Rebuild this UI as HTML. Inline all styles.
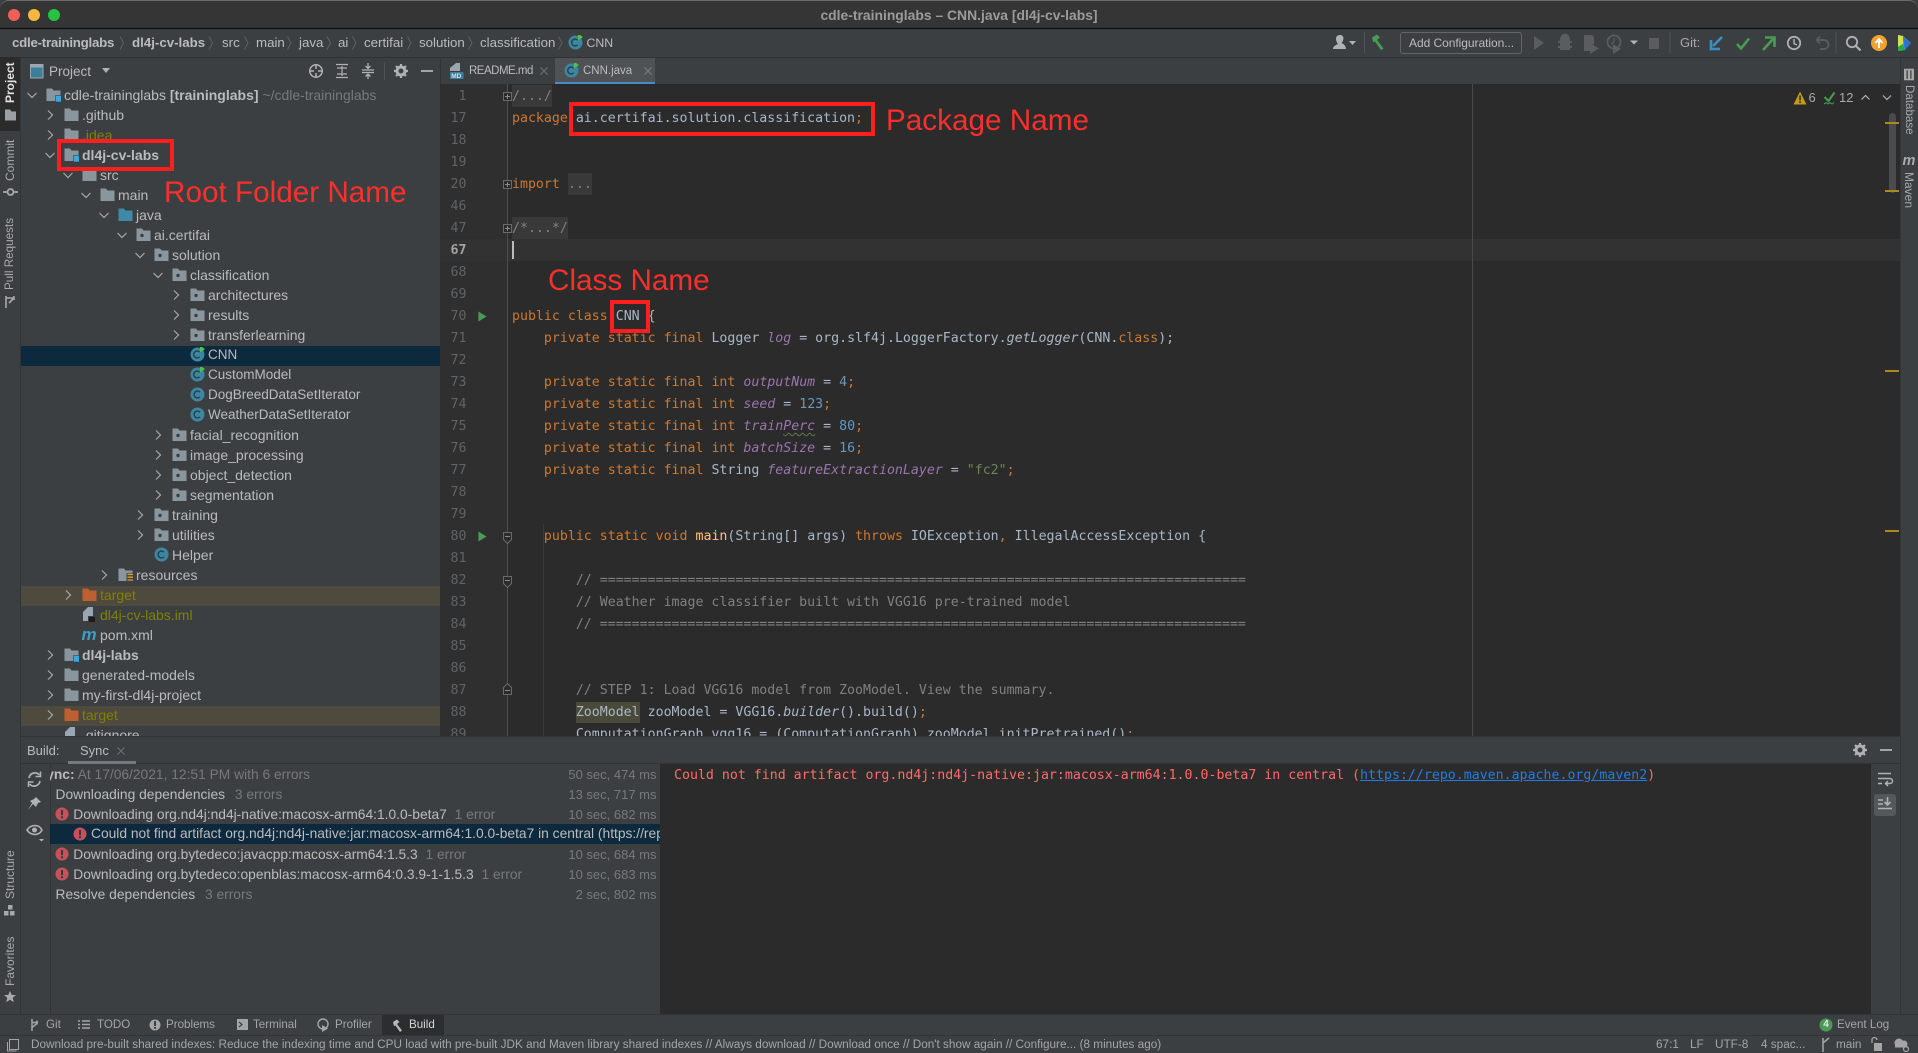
<!DOCTYPE html>
<html><head><meta charset="utf-8"><title>CNN.java</title>
<style>
*{box-sizing:border-box}
html,body{margin:0;padding:0;background:#000}
#a{position:relative;width:1918px;height:1053px;overflow:hidden;background:#3c3f41;font-family:"Liberation Sans",sans-serif;color:#bbb;font-size:14px}
.p{position:absolute}
.t{position:absolute;white-space:nowrap}
svg{position:absolute;overflow:visible}
.r{position:absolute;height:20px;line-height:20px;white-space:nowrap;padding-left:18px;color:#bbb;font-size:14px}
.r svg.c{left:-21px;top:3px;width:14px;height:14px}
.r svg.i{left:0;top:2px;width:15px;height:15px}
.q{font-size:13.5px}
.o{color:#808000}.b{font-weight:bold}.d{color:#787878}
.nv{position:absolute;top:33px;height:20px;line-height:20px;font-size:13.3px;white-space:nowrap;color:#bbb}
.l{position:absolute;left:512px;height:22px;margin:0;font:13.26px/22px "DejaVu Sans Mono","Liberation Mono",monospace;white-space:pre;color:#a9b7c6}
.k{color:#cc7832}.f{color:#9876aa;font-style:italic}.n{color:#6897bb}.s{color:#6a8759}.m{color:#808080}.e{font-style:italic}
.g{position:absolute;left:430px;width:36.5px;text-align:right;height:22px;font:13.26px/22px "DejaVu Sans Mono","Liberation Mono",monospace;color:#606366}
.v{position:absolute;writing-mode:vertical-rl;transform:rotate(180deg);left:3px;width:14px;line-height:14px;font-size:12px;color:#a9a9a9;white-space:nowrap}
.w{position:absolute;writing-mode:vertical-rl;left:1902px;width:14px;line-height:14px;font-size:12px;color:#a9a9a9;white-space:nowrap}
.box{position:absolute;border:4.5px solid #fb1f1f}
.lab{position:absolute;font-size:29.7px;line-height:34px;color:#fb2f2b;white-space:nowrap}
.bt{position:absolute;height:20px;line-height:20px;white-space:nowrap;font-size:13.8px;color:#bbb}
.tm{position:absolute;height:20px;line-height:20px;font-size:13px;color:#787878;white-space:nowrap}
.tb{position:absolute;top:1015px;height:20px;line-height:20px;font-size:11.6px;color:#a5a5a5;white-space:nowrap}
.st{position:absolute;top:1036px;height:18px;line-height:18px;font-size:11.75px;color:#a5a5a5;white-space:nowrap}
</style></head><body><div id="a">

<svg width="0" height="0" style="position:absolute">
<defs>
<symbol id="cr" viewBox="0 0 14 14"><path d="M5 2.5L9.5 7L5 11.5" fill="none" stroke="#a8a8a8" stroke-width="1.2"/></symbol>
<symbol id="cd" viewBox="0 0 14 14"><path d="M2.5 5L7 9.5L11.5 5" fill="none" stroke="#a8a8a8" stroke-width="1.2"/></symbol>
<symbol id="fo" viewBox="0 0 15 15"><path d="M0.5 1.5h5.5l1.5 2h7v10.5h-14z" fill="#8a969e"/></symbol>
<symbol id="mo" viewBox="0 0 15 15"><path d="M0.5 1.5h5.5l1.5 2h7v10.5h-14z" fill="#8a969e"/><rect x="9.5" y="8.5" width="6.5" height="6.5" fill="#3aa7dd" stroke="#3c3f41" stroke-width=".6"/></symbol>
<symbol id="pk" viewBox="0 0 15 15"><path d="M0.5 1.5h5.5l1.5 2h7v10.5h-14z" fill="#8a969e"/><circle cx="6" cy="8.5" r="1.7" fill="#3c3f41"/></symbol>
<symbol id="jv" viewBox="0 0 15 15"><path d="M0.5 1.5h5.5l1.5 2h7v10.5h-14z" fill="#3f8aa8"/></symbol>
<symbol id="or" viewBox="0 0 15 15"><path d="M0.5 1.5h5.5l1.5 2h7v10.5h-14z" fill="#bd5f33"/></symbol>
<symbol id="re" viewBox="0 0 15 15"><path d="M0.5 1.5h5.5l1.5 2h7v10.5h-14z" fill="#8a969e"/><rect x="8.5" y="6.2" width="7.5" height="8.8" fill="#3c3f41"/><path d="M9.5 7.5h6.5M9.5 10.2h6.5M9.5 13h6.5" stroke="#e0a52c" stroke-width="1.3"/></symbol>
<symbol id="cl" viewBox="0 0 15 15"><circle cx="7.5" cy="7.5" r="7" fill="#3e86a0"/><path d="M10 5.2A3.4 3.4 0 1 0 10 9.8" fill="none" stroke="#27404d" stroke-width="1.4"/></symbol>
<symbol id="cg" viewBox="0 0 15 15"><circle cx="7.5" cy="7.5" r="7" fill="#3e86a0"/><path d="M9.6 5.2A3.4 3.4 0 1 0 9.6 9.8" fill="none" stroke="#27404d" stroke-width="1.4"/><path d="M10 -1.5L15 2L10 5.5z" fill="#4fbf4f"/></symbol>
<symbol id="er" viewBox="0 0 14 14"><circle cx="7" cy="7" r="6.5" fill="#c7505a"/><rect x="6" y="3" width="2" height="5.2" fill="#35383a"/><rect x="6" y="9.3" width="2" height="2" fill="#35383a"/></symbol>
<symbol id="pl" viewBox="0 0 10 12" preserveAspectRatio="none"><path d="M0.5 0.5L9.5 6L0.5 11.5z" fill="#499c54"/></symbol>
<symbol id="fp" viewBox="0 0 9 9"><rect x=".5" y=".5" width="8" height="8" fill="#2b2b2b" stroke="#6a6a6a"/><path d="M2 4.5h5M4.5 2v5" stroke="#8a8a8a"/></symbol>
<symbol id="ft" viewBox="0 0 9 12"><path d="M.5 .5h8v7l-4 4l-4-4z" fill="#2b2b2b" stroke="#6a6a6a"/><path d="M2 4.5h5" stroke="#8a8a8a"/></symbol>
<symbol id="fb" viewBox="0 0 9 12"><path d="M.5 11.5h8v-7l-4-4l-4 4z" fill="#2b2b2b" stroke="#6a6a6a"/><path d="M2 7.5h5" stroke="#8a8a8a"/></symbol>
<symbol id="gear" viewBox="0 0 14 14"><circle cx="7" cy="7" r="4" fill="none" stroke="#afb1b3" stroke-width="3"/><path d="M7 0v3M7 11v3M0 7h3M11 7h3M2 2l2 2M10 10l2 2M12 2l-2 2M4 10l-2 2" stroke="#afb1b3" stroke-width="2.2"/></symbol>
</defs></svg>

<!-- title bar -->
<div class="p" style="left:0;top:0;width:1918px;height:29px;background:#353535;border-top:1px solid #6a6a6a;border-bottom:1px solid #0a0a0a;border-radius:9px 9px 0 0"></div>
<div class="p" style="left:8px;top:9px;width:12px;height:12px;border-radius:50%;background:#ee5f58"></div>
<div class="p" style="left:28px;top:9px;width:12px;height:12px;border-radius:50%;background:#f6b740"></div>
<div class="p" style="left:48px;top:9px;width:12px;height:12px;border-radius:50%;background:#26c241"></div>
<div class="t" style="left:0;width:1918px;text-align:center;top:5px;line-height:20px;font-size:13.9px;font-weight:bold;color:#9b9b9b">cdle-traininglabs – CNN.java [dl4j-cv-labs]</div>

<!-- nav bar -->
<div class="p" style="left:0;top:29px;width:1918px;height:29px;background:#3c3f41;border-bottom:1px solid #303234"></div>
<div class="nv b" style="left:12px;letter-spacing:-.25px">cdle-traininglabs</div>
<div class="nv b" style="left:132px">dl4j-cv-labs</div>
<div class="nv" style="left:222px">src</div>
<div class="nv" style="left:256px">main</div>
<div class="nv" style="left:299px">java</div>
<div class="nv" style="left:338px">ai</div>
<div class="nv" style="left:364px">certifai</div>
<div class="nv" style="left:419px">solution</div>
<div class="nv" style="left:480px">classification</div>
<div class="nv" style="left:586.5px;font-size:12.3px">CNN</div>
<svg width="570" height="20" style="left:0;top:33px"><path d="M120 3.5l3.5 6.5l-3.5 6.5M209 3.5l3.5 6.5l-3.5 6.5M244.5 3.5l3.5 6.5l-3.5 6.5M287.5 3.5l3.5 6.5l-3.5 6.5M327 3.5l3.5 6.5l-3.5 6.5M352.5 3.5l3.5 6.5l-3.5 6.5M407.5 3.5l3.5 6.5l-3.5 6.5M468.5 3.5l3.5 6.5l-3.5 6.5M558.5 3.5l3.5 6.5l-3.5 6.5" fill="none" stroke="#5c5f61" stroke-width="1"/></svg>
<svg style="left:568px;top:35px" width="15" height="15"><use href="#cg"/></svg>

<!-- toolbar icons -->
<svg style="left:1330px;top:32px" width="250" height="24">
<path d="M3 17c0-3 3-4 5-5c-1-1-2-3-2-5c0-3 2-4 4-4s3 1 3.5 3c0 2-1 4-2 5c2 1 4 2 4.5 6z" fill="#afb1b3"/>
<path d="M19 9h7l-3.500 4z" fill="#afb1b3"/>
<path d="M34.5 0v21" stroke="#505355"/>
<path d="M42 5.5l5-3l3 3l-3 2.500l6.500 8.500l-2.500 1.500l-6-8.500l-2 .5z" fill="#499c54"/>
</svg>
<div class="p" style="left:1400px;top:32px;width:121.5px;height:22px;border:1px solid #646464;border-radius:3px"></div>
<div class="t" style="left:1409px;top:33px;line-height:20px;font-size:12px;letter-spacing:-.05px;color:#bbb">Add Configuration...</div>
<svg style="left:1530px;top:32px" width="140" height="24">
<path d="M4 4l10 7l-10 7z" fill="#5a5c5e"/>
<path d="M30 6h10v12h-10z M28 9h14v2h-14z M28 14h14v2h-14z" fill="#5a5c5e"/><circle cx="35" cy="6" r="4.5" fill="#5a5c5e"/>
<path d="M54 3h8l2 2v7l-3 2v5h-7z" fill="#5a5c5e"/><path d="M60 11l9 5.500l-9 5.500z" fill="#5a5c5e"/>
<circle cx="84" cy="10" r="6.5" fill="none" stroke="#5a5c5e" stroke-width="1.8"/><path d="M84 6v4l-3 2" fill="none" stroke="#5a5c5e" stroke-width="1.3"/><path d="M83 12l8 5l-8 5z" fill="#5a5c5e"/>
<path d="M100 8.5h8l-4 4z" fill="#afb1b3"/>
<rect x="119" y="6" width="10" height="11" fill="#5a5c5e"/>
<path d="M140 0v21" stroke="#505355"/>
</svg>
<div class="t" style="left:1680px;top:33px;line-height:20px;font-size:13px;color:#a9a9a9">Git:</div>
<svg style="left:1705px;top:32px" width="213" height="24">
<path d="M17 5L8 14" stroke="#3592c4" stroke-width="2.6"/><path d="M6 8v9h9" fill="none" stroke="#3592c4" stroke-width="2.6"/>
<path d="M32 12l4 4.500l8-10" fill="none" stroke="#499c54" stroke-width="2.6"/>
<path d="M58 18L68 7" stroke="#499c54" stroke-width="2.6"/><path d="M60 5.5h9.5v9.5" fill="none" stroke="#499c54" stroke-width="2.6"/>
<circle cx="89" cy="11" r="6.2" fill="none" stroke="#afb1b3" stroke-width="1.8"/><path d="M89 7v4.500l3 1.500" fill="none" stroke="#afb1b3" stroke-width="1.5"/>
<path d="M112 8h7a4 4 0 0 1 0 9h-4M115 4.500l-3.500 3.500l3.500 3.500" fill="none" stroke="#5c5e60" stroke-width="1.7"/>
<path d="M131 0v21" stroke="#505355"/>
<circle cx="147" cy="10" r="5.2" fill="none" stroke="#afb1b3" stroke-width="1.8"/><path d="M151 14l4.500 4.500" stroke="#afb1b3" stroke-width="2.2"/>
<circle cx="174" cy="11" r="8" fill="#f0a22f"/><path d="M174 16v-7M170.5 11l3.500-4l3.500 4" fill="none" stroke="#fff" stroke-width="1.8"/>
<path d="M193 3l5 1l8 7l-6 7l-6 1z" fill="#27b5d6"/><path d="M198 5l8 6l-6 7z" fill="#2f6fd6"/><path d="M193 3l5 1v8l-5 3z" fill="#d6e04a"/><path d="M193 15l5-3l2 6l-7 1z" fill="#2aa84a"/>
</svg>

<!-- left strip -->
<div class="p" style="left:0;top:58px;width:20.5px;height:678px;background:#3c3f41;border-right:1px solid #323436"></div>
<div class="p" style="left:0;top:736px;width:20.5px;height:278px;background:#3c3f41;border-right:1px solid #323436"></div>
<div class="p" style="left:0;top:57px;width:20px;height:74px;background:#2b2b2b"></div>
<div class="v" style="top:67px;color:#e2e2e2;font-weight:bold;height:36px">Project</div>
<svg style="left:4px;top:108px" width="13" height="13"><path d="M1 1.5h5l1.500 2h4.500v9h-11z" fill="#9aa0a3"/></svg>
<div class="v" style="top:141px;height:40px">Commit</div>
<svg style="left:3px;top:185px" width="15" height="14"><circle cx="7.5" cy="7" r="3" fill="none" stroke="#a9a9a9" stroke-width="1.8"/><path d="M0 7h4M11 7h4" stroke="#a9a9a9" stroke-width="1.8"/></svg>
<div class="v" style="top:220px;height:70px;font-size:11.7px">Pull Requests</div>
<svg style="left:3px;top:295px" width="15" height="14"><path d="M3 1v12M3 3h8M6 8l5-5M11 1v4" fill="none" stroke="#a9a9a9" stroke-width="1.6"/></svg>
<div class="v" style="top:851px;height:48px">Structure</div>
<svg style="left:4px;top:905px" width="12" height="11"><rect x="0" y="6" width="4.5" height="4.5" fill="#a9a9a9"/><rect x="6" y="6" width="4.5" height="4.5" fill="#a9a9a9"/><rect x="4" y="0" width="4.5" height="4.5" fill="#a9a9a9"/></svg>
<div class="v" style="top:938px;height:48px">Favorites</div>
<svg style="left:4px;top:991px" width="12" height="12"><path d="M6 0l1.800 4h4.200l-3.300 2.800l1.200 4.500l-3.900-2.500l-3.900 2.500l1.200-4.500l-3.300-2.800h4.200z" fill="#a9a9a9"/></svg>

<!-- project header -->
<svg style="left:30px;top:64px" width="14" height="15"><rect x=".5" y=".5" width="12.5" height="13.5" fill="#3d7e9c" stroke="#9aa7b0"/><rect x=".5" y=".5" width="12.5" height="3" fill="#9aa7b0"/></svg>
<div class="t" style="left:49px;top:62px;line-height:20px;font-size:13.5px;color:#bbb">Project</div>
<svg style="left:100px;top:66px" width="12" height="10"><path d="M2 2h8l-4 5z" fill="#afb1b3"/></svg>
<svg style="left:308px;top:63px" width="130" height="18">
<circle cx="8" cy="8" r="6.2" fill="none" stroke="#afb1b3" stroke-width="1.5"/><path d="M8 1v14M1 8h14" stroke="#afb1b3" stroke-width="1.5"/><rect x="6" y="6" width="4" height="4" fill="#3c3f41"/>
<path d="M28 1.5h12M28 14.500h12M29 5h10M29 11h10M34 3v10" stroke="#afb1b3" stroke-width="1.2" fill="none"/>
<path d="M54 7h12M54 9.500h12M60 0v5M60 16v-5M57.500 3l2.500 2.500l2.500-2.500M57.500 13.500l2.500-2.500l2.500 2.500" stroke="#afb1b3" stroke-width="1.3" fill="none"/>
<path d="M76.5 0v17" stroke="#505355"/>
<path d="M113 8h12" stroke="#afb1b3" stroke-width="1.8"/>
</svg>
<svg style="left:394px;top:64px" width="14" height="14"><use href="#gear"/></svg>

<!-- tree -->
<div class="p" style="left:0;top:84px;width:440px;height:652px;overflow:hidden">
<div class="p" style="left:21px;top:262px;width:419px;height:20px;background:#0d293e"></div>
<div class="p" style="left:21px;top:502px;width:419px;height:19.5px;background:#4e4a3d"></div>
<div class="p" style="left:21px;top:622px;width:419px;height:19.5px;background:#4e4a3d"></div>
<div class="r" style="top:1px;left:46px"><svg class="c"><use href="#cd"/></svg><svg class="i"><use href="#mo"/></svg>cdle-traininglabs <b>[traininglabs]</b> <span class="d">~/cdle-traininglabs</span></div>
<div class="r" style="top:21px;left:64px"><svg class="c"><use href="#cr"/></svg><svg class="i"><use href="#fo"/></svg>.github</div>
<div class="r o" style="top:41px;left:64px"><svg class="c"><use href="#cr"/></svg><svg class="i"><use href="#fo"/></svg>.idea</div>
<div class="r b" style="top:61px;left:64px"><svg class="c"><use href="#cd"/></svg><svg class="i"><use href="#mo"/></svg>dl4j-cv-labs</div>
<div class="r" style="top:81px;left:82px"><svg class="c"><use href="#cd"/></svg><svg class="i"><use href="#fo"/></svg>src</div>
<div class="r" style="top:101px;left:100px"><svg class="c"><use href="#cd"/></svg><svg class="i"><use href="#fo"/></svg>main</div>
<div class="r" style="top:121px;left:118px"><svg class="c"><use href="#cd"/></svg><svg class="i"><use href="#jv"/></svg>java</div>
<div class="r" style="top:141px;left:136px"><svg class="c"><use href="#cd"/></svg><svg class="i"><use href="#pk"/></svg>ai.certifai</div>
<div class="r" style="top:161px;left:154px"><svg class="c"><use href="#cd"/></svg><svg class="i"><use href="#pk"/></svg>solution</div>
<div class="r" style="top:181px;left:172px"><svg class="c"><use href="#cd"/></svg><svg class="i"><use href="#pk"/></svg>classification</div>
<div class="r" style="top:201px;left:190px"><svg class="c"><use href="#cr"/></svg><svg class="i"><use href="#pk"/></svg>architectures</div>
<div class="r" style="top:221px;left:190px"><svg class="c"><use href="#cr"/></svg><svg class="i"><use href="#pk"/></svg>results</div>
<div class="r" style="top:241px;left:190px"><svg class="c"><use href="#cr"/></svg><svg class="i"><use href="#pk"/></svg>transferlearning</div>
<div class="r q" style="top:261px;left:190px"><svg class="i"><use href="#cg"/></svg>CNN</div>
<div class="r q" style="top:281px;left:190px"><svg class="i"><use href="#cg"/></svg>CustomModel</div>
<div class="r q" style="top:301px;left:190px"><svg class="i"><use href="#cl"/></svg>DogBreedDataSetIterator</div>
<div class="r q" style="top:321px;left:190px"><svg class="i"><use href="#cl"/></svg>WeatherDataSetIterator</div>
<div class="r" style="top:341px;left:172px"><svg class="c"><use href="#cr"/></svg><svg class="i"><use href="#pk"/></svg>facial_recognition</div>
<div class="r" style="top:361px;left:172px"><svg class="c"><use href="#cr"/></svg><svg class="i"><use href="#pk"/></svg>image_processing</div>
<div class="r" style="top:381px;left:172px"><svg class="c"><use href="#cr"/></svg><svg class="i"><use href="#pk"/></svg>object_detection</div>
<div class="r" style="top:401px;left:172px"><svg class="c"><use href="#cr"/></svg><svg class="i"><use href="#pk"/></svg>segmentation</div>
<div class="r" style="top:421px;left:154px"><svg class="c"><use href="#cr"/></svg><svg class="i"><use href="#pk"/></svg>training</div>
<div class="r" style="top:441px;left:154px"><svg class="c"><use href="#cr"/></svg><svg class="i"><use href="#pk"/></svg>utilities</div>
<div class="r" style="top:461px;left:154px"><svg class="i"><use href="#cl"/></svg>Helper</div>
<div class="r" style="top:481px;left:118px"><svg class="c"><use href="#cr"/></svg><svg class="i"><use href="#re"/></svg>resources</div>
<div class="r o" style="top:501px;left:82px"><svg class="c"><use href="#cr"/></svg><svg class="i"><use href="#or"/></svg>target</div>
<div class="r o" style="top:521px;left:82px"><svg class="i" viewBox="0 0 15 15"><path d="M6 0h5v9h-5v5h-5v-9z" fill="#9aa7b0"/><rect x="7" y="10" width="6" height="5" fill="#1c1c1c"/></svg>dl4j-cv-labs.iml</div>
<div class="r" style="top:541px;left:82px"><svg class="i" viewBox="0 0 15 15"><text x="-.5" y="13" font-family="Liberation Sans" font-weight="bold" font-style="italic" font-size="17" fill="#3f9cc4">m</text></svg>pom.xml</div>
<div class="r b" style="top:561px;left:64px"><svg class="c"><use href="#cr"/></svg><svg class="i"><use href="#mo"/></svg>dl4j-labs</div>
<div class="r" style="top:581px;left:64px"><svg class="c"><use href="#cr"/></svg><svg class="i"><use href="#fo"/></svg>generated-models</div>
<div class="r" style="top:601px;left:64px"><svg class="c"><use href="#cr"/></svg><svg class="i"><use href="#fo"/></svg>my-first-dl4j-project</div>
<div class="r o" style="top:621px;left:64px"><svg class="c"><use href="#cr"/></svg><svg class="i"><use href="#or"/></svg>target</div>
<div class="r" style="top:641px;left:64px"><svg class="i" viewBox="0 0 15 15"><path d="M6 0h5v14h-10v-9z" fill="#9aa7b0"/></svg>.gitignore</div>
</div>

<!-- tabs -->
<div class="p" style="left:440px;top:58px;width:1460px;height:26px;background:#3c3f41;border-left:1px solid #323436"></div>
<div class="p" style="left:555px;top:58px;width:100px;height:27px;background:#4e5254;border-bottom:3px solid #4a88c7"></div>
<svg style="left:450px;top:63px" width="14" height="16"><path d="M6 0h4v8h4v0h-14v-3z" fill="#9aa7b0"/><rect x="0" y="9" width="13.5" height="7" fill="#3d7e9c"/><text x="1.2" y="15" font-family="Liberation Sans" font-size="6.5" font-weight="bold" fill="#cfe2ea">MD</text></svg>
<div class="t" style="left:469px;top:61px;line-height:20px;font-size:11.5px;letter-spacing:-.5px;color:#bbb">README.md</div>
<svg style="left:540px;top:67px" width="8" height="8"><path d="M.5 .5l7 7M7.5 .5l-7 7" stroke="#6f7173" stroke-width="1.1"/></svg>
<svg style="left:564px;top:63px" width="15" height="15"><use href="#cg"/></svg>
<div class="t" style="left:583px;top:61px;line-height:20px;font-size:11.5px;color:#bbb">CNN.java</div>
<svg style="left:644px;top:67px" width="8" height="8"><path d="M.5 .5l7 7M7.5 .5l-7 7" stroke="#7a7c7e" stroke-width="1.1"/></svg>

<!-- editor -->
<div class="p" style="left:440px;top:84px;width:1460px;height:652px;background:#2b2b2b;overflow:hidden">
<div class="p" style="left:0;top:0;width:66.5px;height:652px;background:#2f2f2f"></div>
<div class="p" style="left:0;top:155px;width:1460px;height:22px;background:#323232"></div>
<div class="p" style="left:66.5px;top:0;width:1px;height:652px;background:#4f4f4f"></div>
<div class="p" style="left:1032px;top:0;width:1px;height:652px;background:#4a4a4a"></div>
<div class="p" style="left:102.5px;top:440px;width:1px;height:212px;background:#3a3a3a"></div>
<div class="p" style="left:72px;top:1px;width:40px;height:22px;background:#393939"></div>
<div class="p" style="left:128px;top:89px;width:24px;height:22px;background:#393939"></div>
<div class="p" style="left:72px;top:133px;width:56px;height:22px;background:#393939"></div>
<div class="p" style="left:136px;top:618px;width:64px;height:21px;background:#4a4a3a"></div>
</div>

<svg style="left:502.5px;top:92px" width="9" height="9"><use href="#fp"/></svg>
<svg style="left:502.5px;top:180px" width="9" height="9"><use href="#fp"/></svg>
<svg style="left:502.5px;top:224px" width="9" height="9"><use href="#fp"/></svg>
<svg style="left:502.5px;top:532px" width="9" height="12"><use href="#ft"/></svg>
<svg style="left:502.5px;top:576px" width="9" height="12"><use href="#ft"/></svg>
<svg style="left:502.5px;top:683px" width="9" height="12"><use href="#fb"/></svg>
<svg style="left:478px;top:311px" width="9" height="11"><use href="#pl"/></svg>
<svg style="left:478px;top:531px" width="9" height="11"><use href="#pl"/></svg>

<div class="g" style="top:86px">1</div>
<div class="g" style="top:108px">17</div>
<div class="g" style="top:130px">18</div>
<div class="g" style="top:152px">19</div>
<div class="g" style="top:174px">20</div>
<div class="g" style="top:196px">46</div>
<div class="g" style="top:218px">47</div>
<div class="g" style="top:240px;color:#a4a3a3;font-weight:bold">67</div>
<div class="g" style="top:262px">68</div>
<div class="g" style="top:284px">69</div>
<div class="g" style="top:306px">70</div>
<div class="g" style="top:328px">71</div>
<div class="g" style="top:350px">72</div>
<div class="g" style="top:372px">73</div>
<div class="g" style="top:394px">74</div>
<div class="g" style="top:416px">75</div>
<div class="g" style="top:438px">76</div>
<div class="g" style="top:460px">77</div>
<div class="g" style="top:482px">78</div>
<div class="g" style="top:504px">79</div>
<div class="g" style="top:526px">80</div>
<div class="g" style="top:548px">81</div>
<div class="g" style="top:570px">82</div>
<div class="g" style="top:592px">83</div>
<div class="g" style="top:614px">84</div>
<div class="g" style="top:636px">85</div>
<div class="g" style="top:658px">86</div>
<div class="g" style="top:680px">87</div>
<div class="g" style="top:702px">88</div>

<pre class="l m" style="top:86px">/.../</pre>
<pre class="l" style="top:108px"><span class="k">package</span> ai.certifai.solution.classification<span class="k">;</span></pre>
<pre class="l" style="top:174px"><span class="k">import</span> <span class="m">...</span></pre>
<pre class="l m" style="top:218px">/*...*/</pre>
<div class="p" style="left:512px;top:241px;width:2px;height:18px;background:#bbb"></div>
<pre class="l" style="top:306px"><span class="k">public class</span> CNN {</pre>
<pre class="l" style="top:328px">    <span class="k">private static final</span> Logger <span class="f">log</span> = org.slf4j.LoggerFactory.<span class="e">getLogger</span>(CNN.<span class="k">class</span>);</pre>
<pre class="l" style="top:372px">    <span class="k">private static final int</span> <span class="f">outputNum</span> = <span class="n">4</span><span class="k">;</span></pre>
<pre class="l" style="top:394px">    <span class="k">private static final int</span> <span class="f">seed</span> = <span class="n">123</span><span class="k">;</span></pre>
<pre class="l" style="top:416px">    <span class="k">private static final int</span> <span class="f">train<span style="text-decoration:underline wavy #5c7a50 1px;text-underline-offset:2px">Perc</span></span> = <span class="n">80</span><span class="k">;</span></pre>
<pre class="l" style="top:438px">    <span class="k">private static final int</span> <span class="f">batchSize</span> = <span class="n">16</span><span class="k">;</span></pre>
<pre class="l" style="top:460px">    <span class="k">private static final</span> String <span class="f">featureExtractionLayer</span> = <span class="s">"fc2"</span><span class="k">;</span></pre>
<pre class="l" style="top:526px">    <span class="k">public static void</span> <span style="color:#ffc66d">main</span>(String[] args) <span class="k">throws</span> IOException<span class="k">,</span> IllegalAccessException {</pre>
<pre class="l m" style="top:570px">        // =================================================================================</pre>
<pre class="l m" style="top:592px">        // Weather image classifier built with VGG16 pre-trained model</pre>
<pre class="l m" style="top:614px">        // =================================================================================</pre>
<pre class="l m" style="top:680px">        // STEP 1: Load VGG16 model from ZooModel. View the summary.</pre>
<pre class="l" style="top:702px">        ZooModel zooModel = VGG16.<span class="e">builder</span>().build()<span class="k">;</span></pre>
<div class="p" style="left:440px;top:723px;width:1460px;height:13px;overflow:hidden">
<div class="g" style="top:1px;left:-10px">89</div>
<pre class="l" style="top:1px;left:72px">        ComputationGraph vgg16 = (ComputationGraph) zooModel.initPretrained()<span class="k">;</span></pre></div>

<!-- inspection + scrollbar -->
<svg style="left:1793px;top:91px" width="15" height="14"><path d="M7 .5l6.500 13h-13z" fill="#c29a1b"/><rect x="6.3" y="4.5" width="1.5" height="5" fill="#2b2b2b"/><rect x="6.3" y="10.5" width="1.5" height="1.6" fill="#2b2b2b"/></svg>
<div class="t" style="left:1808.5px;top:88px;line-height:20px;font-size:13px;color:#a9a9a9">6</div>
<svg style="left:1823px;top:91px" width="15" height="15"><path d="M1.500 6l4 4l6-8.500" fill="none" stroke="#499c54" stroke-width="2"/><path d="M1 13l2-1.500l2 1.500l2-1.500l2 1.500l2-1.500" fill="none" stroke="#499c54" stroke-width="1"/></svg>
<div class="t" style="left:1839px;top:88px;line-height:20px;font-size:13px;color:#a9a9a9">12</div>
<svg style="left:1861px;top:94px" width="32" height="8"><path d="M.5 5.500l4-4l4 4M22 1.500l4 4l4-4" fill="none" stroke="#afb1b3" stroke-width="1.2"/></svg>
<div class="p" style="left:1889px;top:113px;width:7px;height:80px;border-radius:4px;background:#4a4b4c"></div>
<div class="p" style="left:1885px;top:122px;width:14px;height:2px;background:#ad8a1e"></div>
<div class="p" style="left:1885px;top:190px;width:14px;height:2px;background:#ad8a1e"></div>
<div class="p" style="left:1885px;top:370px;width:14px;height:2px;background:#ad8a1e"></div>
<div class="p" style="left:1885px;top:530px;width:14px;height:2px;background:#ad8a1e"></div>

<!-- right strip -->
<div class="p" style="left:1900px;top:58px;width:18px;height:956px;background:#3c3f41;border-left:1px solid #323436"></div>
<svg style="left:1903px;top:68px" width="12" height="13"><path d="M1 1.500h10M1 11.500h10" stroke="#a9a9a9" stroke-width="1.5"/><rect x="1" y="1" width="2.5" height="11" fill="#a9a9a9"/><rect x="4.8" y="1" width="2.5" height="11" fill="#a9a9a9"/><rect x="8.5" y="1" width="2.5" height="11" fill="#a9a9a9"/></svg>
<div class="w" style="top:85px;height:49px;font-size:11.6px">Database</div>
<div class="t" style="left:1902.5px;top:151px;font-size:14.5px;line-height:20px;font-weight:bold;font-style:italic;color:#a9a9a9">m</div>
<div class="w" style="top:172px;height:34px">Maven</div>

<!-- annotations -->
<div class="box" style="left:57px;top:139px;width:117px;height:32px"></div>
<div class="box" style="left:569px;top:102px;width:306px;height:34px"></div>
<div class="box" style="left:610px;top:300px;width:40px;height:33px"></div>
<div class="lab" style="left:164px;top:176px">Root Folder Name</div>
<div class="lab" style="left:886px;top:104px">Package Name</div>
<div class="lab" style="left:548px;top:264px">Class Name</div>

<!-- bottom panel -->
<div class="p" style="left:21px;top:736px;width:1879px;height:28px;background:#3c3f41;border-top:1px solid #323436;border-bottom:1px solid #323436"></div>
<div class="t" style="left:27px;top:741px;line-height:20px;font-size:13px;color:#bbb">Build:</div>
<div class="t" style="left:80px;top:741px;line-height:20px;font-size:13px;color:#bbb">Sync</div>
<svg style="left:117px;top:747px" width="8" height="8"><path d="M.5 .5l7 7M7.5 .5l-7 7" stroke="#6f7173" stroke-width="1"/></svg>
<div class="p" style="left:68px;top:761px;width:68px;height:3px;background:#747a80"></div>
<svg style="left:1880px;top:743px" width="12" height="14"><path d="M0 7h12" stroke="#afb1b3" stroke-width="1.8"/></svg>
<svg style="left:1853px;top:743px" width="14" height="14"><use href="#gear"/></svg>

<div class="p" style="left:49.5px;top:764px;width:1px;height:250px;background:#323436"></div>
<svg style="left:26px;top:771px" width="18" height="70">
<path d="M3 7a6 6 0 0 1 10.500-3M14 10a6 6 0 0 1-10.500 3" fill="none" stroke="#afb1b3" stroke-width="1.7"/><path d="M14.5 .5v5h-5M2.500 16v-5h5" fill="none" stroke="#afb1b3" stroke-width="1.5"/>
<path d="M10 26l5 5l-3 1l-2 4l-3-3l-5 6l4-7l-2-2l4-2z" fill="#afb1b3"/>
<path d="M1 59c4-6 12-6 15 0c-3 6-11 6-15 0z" fill="none" stroke="#afb1b3" stroke-width="1.6"/><circle cx="8.5" cy="59" r="2.5" fill="#afb1b3"/><path d="M13 68h5l-2.500 2.500z" fill="#afb1b3"/>
</svg>
<div class="p" style="left:50px;top:824px;width:610px;height:20px;background:#0d293e"></div>

<div class="p" style="left:50px;top:765px;width:610px;height:150px;overflow:hidden">
<div class="bt" style="left:-13px;top:0"><b>Sync:</b> <span class="d">At 17/06/2021, 12:51 PM with 6 errors</span></div>
<div class="bt" style="left:5.5px;top:20px">Downloading dependencies <span class="d" style="margin-left:6px">3 errors</span></div>
<div class="bt" style="left:23.3px;top:40px">Downloading org.nd4j:nd4j-native:macosx-arm64:1.0.0-beta7 <span class="d" style="margin-left:4px">1 error</span></div>
<div class="bt" style="left:41px;top:59px">Could not find artifact org.nd4j:nd4j-native:jar:macosx-arm64:1.0.0-beta7 in central (https://repo.maven.apache.org/maven2)</div>
<div class="bt" style="left:23.3px;top:80px">Downloading org.bytedeco:javacpp:macosx-arm64:1.5.3 <span class="d" style="margin-left:4px">1 error</span></div>
<div class="bt" style="left:23.3px;top:100px">Downloading org.bytedeco:openblas:macosx-arm64:0.3.9-1-1.5.3 <span class="d" style="margin-left:4px">1 error</span></div>
<div class="bt" style="left:5.5px;top:120px">Resolve dependencies <span class="d" style="margin-left:6px">3 errors</span></div>
</div>
<svg style="left:55px;top:807px" width="14" height="14"><use href="#er"/></svg>
<svg style="left:73px;top:827px" width="14" height="14"><use href="#er"/></svg>
<svg style="left:55px;top:847px" width="14" height="14"><use href="#er"/></svg>
<svg style="left:55px;top:867px" width="14" height="14"><use href="#er"/></svg>
<div class="tm" style="top:765px;right:1261.5px">50 sec, 474 ms</div>
<div class="tm" style="top:785px;right:1261.5px">13 sec, 717 ms</div>
<div class="tm" style="top:805px;right:1261.5px">10 sec, 682 ms</div>
<div class="tm" style="top:845px;right:1261.5px">10 sec, 684 ms</div>
<div class="tm" style="top:865px;right:1261.5px">10 sec, 683 ms</div>
<div class="tm" style="top:885px;right:1261.5px">2 sec, 802 ms</div>

<div class="p" style="left:660px;top:764px;width:1211px;height:250px;background:#2b2b2b"></div>
<pre class="l" style="left:674px;top:765px;color:#ff6b68">Could not find artifact org.nd4j:nd4j-native:jar:macosx-arm64:1.0.0-beta7 in central (<span style="color:#287bde;text-decoration:underline">https://repo.maven.apache.org/maven2</span>)</pre>
<div class="p" style="left:1874px;top:794px;width:22px;height:22px;border-radius:3px;background:#55585a"></div>
<svg style="left:1877px;top:771px" width="16" height="42">
<path d="M1 2h13M1 7h12a2.500 2.500 0 0 1 0 5h-4M11 9.500l-2.500 2.500l2.500 2.500M1 12h4" fill="none" stroke="#afb1b3" stroke-width="1.5" transform="translate(0,.5)"/>
<path d="M1 29h5M1 33h5M1 37.500h14M10.500 26v8M7.500 31l3 3l3-3" fill="none" stroke="#afb1b3" stroke-width="1.6"/>
</svg>

<!-- tool window bar -->
<div class="p" style="left:0;top:1014px;width:1918px;height:21.5px;background:#3c3f41;border-top:1px solid #323436;border-bottom:1px solid #323436"></div>
<div class="p" style="left:382px;top:1015px;width:62px;height:20px;background:#2b2d2e"></div>
<svg style="left:28px;top:1018px" width="400" height="15">
<path d="M4 1v12M4 4.500h6M4 9.500l5-4M9 2.500v4" fill="none" stroke="#a5a5a5" stroke-width="1.5"/>
<path d="M50 3h2M50 6.500h2M50 10h2M54 3h8M54 6.500h8M54 10h8" stroke="#a5a5a5" stroke-width="1.5"/>
<circle cx="127" cy="7" r="5.5" fill="#a5a5a5"/><rect x="126" y="3" width="2" height="5" fill="#3c3f41"/><rect x="126" y="9" width="2" height="1.8" fill="#3c3f41"/>
<rect x="209" y="1" width="11" height="11" fill="#a5a5a5"/><path d="M211 4l3 2.500l-3 2.500" fill="none" stroke="#3c3f41" stroke-width="1.2"/>
<circle cx="295" cy="6" r="5" fill="none" stroke="#a5a5a5" stroke-width="1.4"/><path d="M294 7l6 3.500l-6 3.500z" fill="#a5a5a5"/>
<path d="M365 4l4-2.500l2.500 2.500l-2.500 2l5 6.500l-2 1.500l-4.500-6.500l-1.500 .5z" fill="#b8b8b8"/>
</svg>
<div class="tb" style="left:46px">Git</div>
<div class="tb" style="left:97px">TODO</div>
<div class="tb" style="left:166px">Problems</div>
<div class="tb" style="left:253px">Terminal</div>
<div class="tb" style="left:335px">Profiler</div>
<div class="tb" style="left:409px;color:#d8d8d8">Build</div>
<svg style="left:1819px;top:1018px" width="14" height="14"><circle cx="7" cy="7" r="6.5" fill="#499c54"/></svg>
<div class="t" style="left:1819px;width:14px;text-align:center;top:1016px;line-height:18px;font-size:10px;font-weight:bold;color:#e6e6e6">4</div>
<div class="tb" style="left:1837px">Event Log</div>

<!-- status bar -->
<svg style="left:7px;top:1039px" width="12" height="13"><rect x="2.5" y=".5" width="9" height="10" fill="none" stroke="#a5a5a5" stroke-width="1"/><path d="M.5 3v9h9" fill="none" stroke="#a5a5a5" stroke-width="1"/></svg>
<div class="st" style="left:31px">Download pre-built shared indexes: Reduce the indexing time and CPU load with pre-built JDK and Maven library shared indexes // Always download // Download once // Don't show again // Configure... (8 minutes ago)</div>
<div class="st" style="left:1656px">67:1</div>
<div class="st" style="left:1690px">LF</div>
<div class="st" style="left:1715px">UTF-8</div>
<div class="st" style="left:1761px">4 spac...</div>
<svg style="left:1820px;top:1037px" width="90" height="16">
<path d="M3 1v14M3 6l6-5" fill="none" stroke="#a5a5a5" stroke-width="1.5"/>
<path d="M52 6v-3a2.500 2.500 0 0 1 5 0" fill="none" stroke="#a5a5a5" stroke-width="1.3"/><rect x="54" y="6" width="8" height="8" fill="#a5a5a5"/>
<circle cx="79" cy="6" r="4.5" fill="#a5a5a5"/><circle cx="84" cy="7" r="3.5" fill="#a5a5a5"/><rect x="75" y="7" width="12" height="3.5" fill="#a5a5a5"/><circle cx="86" cy="12" r="2.5" fill="none" stroke="#a5a5a5" stroke-width="1.2"/>
</svg>
<div class="st" style="left:1836px">main</div>

</div></body></html>
